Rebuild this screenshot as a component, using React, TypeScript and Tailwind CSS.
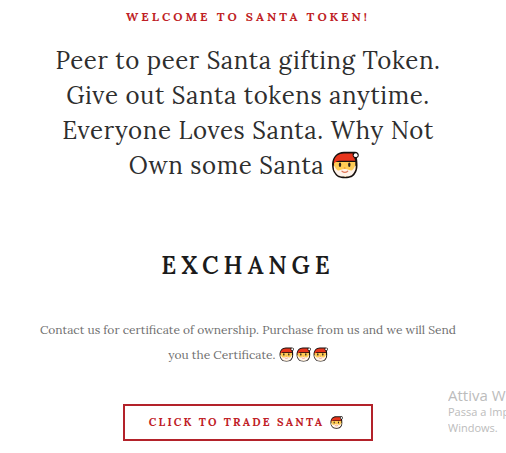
const SantaIcon = ({ className }: { className: string }) => {
  return (
    <svg
      viewBox="0 0 28 28"
      role="img"
      aria-label="Santa"
      className={"inline-block " + className}
    >
      {/* outline */}
      <path
        d="M1 13C1.600 6 6 .8 13 .8h11c2.400 0 3.800 1.300 3.800 3.300 0 1.500-.7 2.500-1.900 3 .3 2 .6 4.500.6 7.400 0 3.500-.8 6.300-2.500 8.500-1.500 2.800-4.500 4.200-10 4.200s-8.500-1.400-10-4.200C1.800 20.500 1 17.500 1 13z"
        fill="#17110f"
      />
      {/* face */}
      <path d="M3 11h21.300v8l-10 7-11.300-7z" fill="#ffcc55" />
      {/* beard */}
      <path
        d="M2.700 14.500c1.300.5 1.500 3.200 3.700 4.700 2 .8 3.700-1.200 7.400-1.200s5.300 2 7.300 1.200c2.200-1.500 2.400-4.200 3.600-4.700.1 3.300-.8 5.900-2.200 7.700-1.500 2.500-4 3.300-8.700 3.300s-7.200-.8-8.700-3.300c-1.500-1.800-2.500-4.400-2.400-7.700z"
        fill="#fff3ea"
      />
      {/* hat */}
      <path
        d="M2.900 10.500C3.900 5.500 7.500 2.600 13 2.600h8.800c-.7 2.200.3 3.700 1.600 4.600l.9 2.600H8.500C6 9.800 4.500 11 2.900 12.500z"
        fill="#e8351c"
      />
      <circle cx="24.700" cy="4.200" r="1.900" fill="#fff" />
      {/* eyes and mouth */}
      <ellipse cx="9" cy="13.800" rx="1.200" ry="2.200" fill="#2b211c" />
      <ellipse cx="18.300" cy="13.800" rx="1.200" ry="2.200" fill="#2b211c" />
      <path
        d="M11 20.200c1.700 1.500 4 1.500 5.700 0"
        fill="none"
        stroke="#e2795c"
        strokeWidth="1.200"
        strokeLinecap="round"
      />
      <circle cx="13.700" cy="17" r="1" fill="#f0a33c" />
    </svg>
  );
};

const ActivationNotice = () => {
  return (
    <aside className="absolute left-[448px] right-0 top-[386px] overflow-hidden whitespace-nowrap text-left font-['Open_Sans',sans-serif] text-[#bcbcbc]">
      <p className="text-[15px] leading-[18px]">Attiva W</p>
      <p className="text-[11px] leading-4">Passa a Imp</p>
      <p className="text-[11px] leading-4">Windows.</p>
    </aside>
  );
};

const App = () => {
  return (
    <main className="relative bg-white pr-2.5 pb-3 text-center font-['Lora','Liberation_Serif',serif]">
      <section className="flex flex-col items-center pt-2">
        <h1 className="text-xs leading-[18px] font-bold tracking-[3px] text-[#c01f26]">
          WELCOME TO SANTA TOKEN!
        </h1>
        <p className="mt-[17px] text-2xl leading-[35px] tracking-wide text-[#2e2e2e]">
          Peer to peer Santa gifting Token.
          <br />
          Give out Santa tokens anytime.
          <br />
          Everyone Loves Santa. Why Not
          <br />
          Own some Santa <SantaIcon className="mr-2 size-7 align-[-5px]" />
        </p>
      </section>

      <section className="flex flex-col items-center pt-[67px]">
        <h2 className="text-2xl leading-8 font-semibold tracking-[5px] text-[#1b1b1b]">
          EXCHANGE
        </h2>
        <p className="mt-[35px] text-xs leading-[25px] text-[#707070]">
          Contact us for certificate of ownership. Purchase from us and we will
          Send
          <br />
          you the Certificate.{" "}
          <span className="inline-flex gap-0.5 align-[-3px]">
            <SantaIcon className="size-[15px]" />
            <SantaIcon className="size-[15px]" />
            <SantaIcon className="size-[15px]" />
          </span>
        </p>
        <button className="mt-[37px] flex items-center gap-1.5 border-2 border-[#b3222a] py-1.5 pr-7 pl-6 text-[11px] leading-[21px] font-bold tracking-[0.2em] text-[#bf2026]">
          CLICK TO TRADE SANTA <SantaIcon className="size-[13px]" />
        </button>
      </section>

      <ActivationNotice />
    </main>
  );
};
export default App;
